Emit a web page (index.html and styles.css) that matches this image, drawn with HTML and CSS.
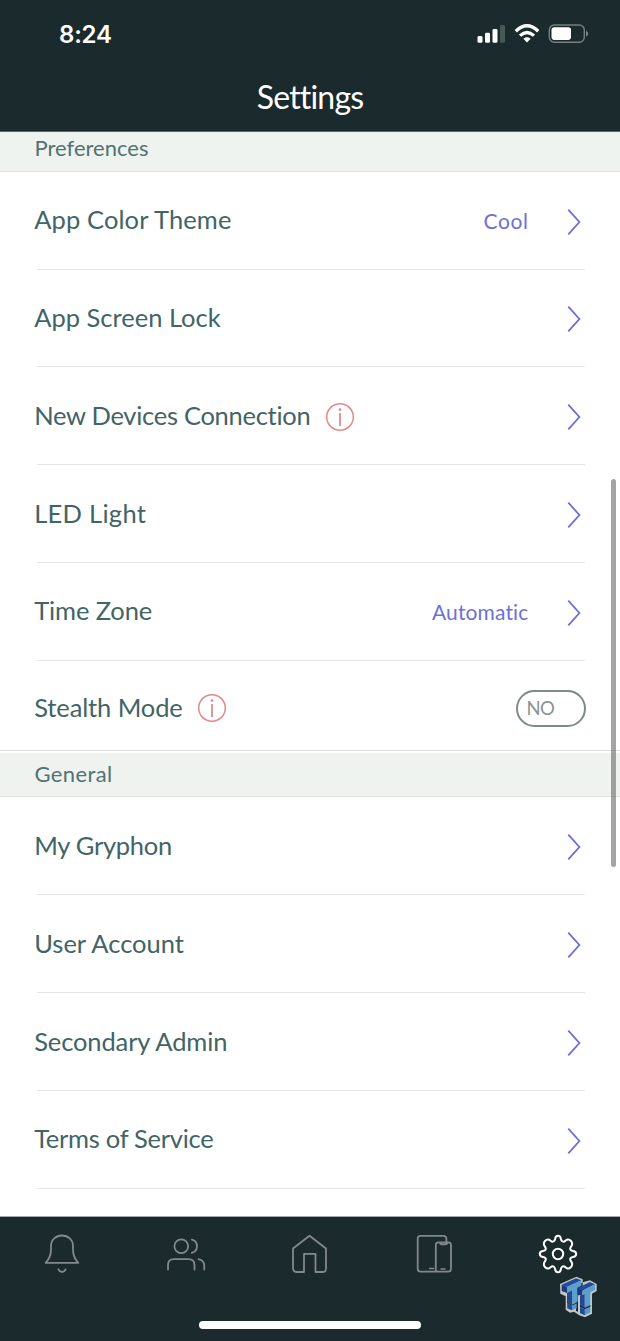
FILE: index.html
```html
<!DOCTYPE html>
<html lang="en">
<head>
<meta charset="utf-8">
<title>Settings</title>
<link rel="stylesheet" href="styles.css">
</head>
<body>
<svg class="defs" width="0" height="0">
  <symbol id="chevron" viewBox="0 0 14 28"><path d="M1.3 1.6L12.4 14L1.3 26.4" fill="none" stroke="currentColor" stroke-width="1.8"/></symbol>
  <symbol id="info" viewBox="0 0 30 30"><circle cx="15" cy="15" r="13.3" fill="none" stroke="currentColor" stroke-width="1.5"/><circle cx="15" cy="7.6" r="1.4" fill="currentColor"/><path d="M15 11V24" stroke="currentColor" stroke-width="1.8"/></symbol>
</svg>
<div class="screen">
  <header class="top">
    <div class="status">
      <span class="time">8:24</span>
      <svg class="indicators" viewBox="0 0 112 22">
        <g fill="#fff"><rect x="0.5" y="13" width="5" height="6.8" rx="1.4"/><rect x="8" y="9.8" width="5" height="10" rx="1.4"/><rect x="15.5" y="6" width="5" height="13.8" rx="1.4"/></g>
        <rect x="23" y="2" width="5" height="17.8" rx="1.4" fill="#485856"/>
        <g fill="none" stroke="#fff" stroke-width="3.3"><path d="M38.8 8.2Q50 -2.6 61.2 8.2"/><path d="M43 12.6Q50 6.2 57 12.6"/></g>
        <path d="M46.4 15.8Q50 12.9 53.6 15.8L50 19.6Z" fill="#fff"/>
        <rect x="72.3" y="2" width="35" height="17.2" rx="5" fill="none" stroke="#75807f" stroke-width="1.4"/>
        <rect x="74.5" y="4.3" width="19.5" height="12.6" rx="2.8" fill="#fff"/>
        <path d="M109 7.8Q111.3 8.8 111.3 10.7Q111.3 12.8 109 13.8Z" fill="#75807f"/>
      </svg>
    </div>
    <h1 class="title">Settings</h1>
  </header>
  <main class="list">
    <h2 class="section first">Preferences</h2>
    <div class="row"><span class="label loose">App Color Theme</span><span class="value wide">Cool</span><svg class="chev"><use href="#chevron"/></svg></div>
    <div class="row"><span class="label">App Screen Lock</span><svg class="chev"><use href="#chevron"/></svg></div>
    <div class="row"><span class="label tight">New Devices Connection</span><svg class="info"><use href="#info"/></svg><svg class="chev"><use href="#chevron"/></svg></div>
    <div class="row"><span class="label looser">LED Light</span><svg class="chev"><use href="#chevron"/></svg></div>
    <div class="row"><span class="label snug">Time Zone</span><span class="value">Automatic</span><svg class="chev"><use href="#chevron"/></svg></div>
    <div class="row last"><span class="label snug">Stealth Mode</span><svg class="info"><use href="#info"/></svg><span class="toggle">NO</span></div>
    <h2 class="section general">General</h2>
    <div class="row"><span class="label tight">My Gryphon</span><svg class="chev"><use href="#chevron"/></svg></div>
    <div class="row"><span class="label">User Account</span><svg class="chev"><use href="#chevron"/></svg></div>
    <div class="row"><span class="label snug">Secondary Admin</span><svg class="chev"><use href="#chevron"/></svg></div>
    <div class="row"><span class="label tight">Terms of Service</span><svg class="chev"><use href="#chevron"/></svg></div>
  </main>
  <nav class="tabs">
    <svg viewBox="0 0 40 40"><path d="M3.7 28.8H36.3C33 25.5 31 22 31 15.5V12C31 5.5 26 1.5 20 1.5S9 5.5 9 12V15.5C9 22 7 25.5 3.7 28.8Z"/><path d="M16.4 35.4Q17.5 38 20 38T23.6 35.4"/></svg>
    <svg viewBox="0 0 40 40"><circle cx="15.3" cy="12.2" r="6.9"/><path d="M25.8 5.6A6.8 6.8 0 0 1 25.8 18.8M2 35.5V31Q2 25.2 8 25.2H22.5Q28.5 25.2 28.5 31V35.5M32.5 25.2Q38.3 26.5 38.3 32V35.5"/></svg>
    <svg viewBox="0 0 40 40"><path d="M19.5 1.7L36 14.5V34.5Q36 38 32.5 38H25.5V19.8H14V38H7Q3 38 3 34V14.5Z"/></svg>
    <svg viewBox="0 0 40 40"><path d="M32.4 8.3V5Q32.4 1.8 29.2 1.8H6.5Q3.7 1.8 3.7 4.6V34.8Q3.7 37.6 6.5 37.6H34.3Q37 37.6 37 34.8V11Q37 8.3 34.3 8.3H24.5Q21.8 8.3 21.8 11V37M26 8.5Q26 10.4 27.8 10.4H31.5Q33.2 10.4 33.2 8.5"/><path stroke-width="1.4" d="M15.6 34.5H19.6M27 35H31"/></svg>
    <svg class="active" viewBox="0 0 40 40"><circle cx="20" cy="20" r="5.2"/><path d="M17.2 4.5Q17.6 1.8 20 1.8T22.8 4.5Q23.5 8.2 26.2 7.6L28.8 5.8Q31 5 32.8 6.8T34 10.9L32.4 13.8Q31.5 16.4 35.2 17.1Q38.2 17.6 38.2 20T35.2 22.9Q31.5 23.6 32.4 26.2L34 29.1Q34.6 31.4 32.8 33.2T28.8 34.2L26.2 32.4Q23.5 31.8 22.8 35.5Q22.4 38.2 20 38.2T17.2 35.5Q16.5 31.8 13.8 32.4L11.2 34.2Q9 35 7.2 33.2T6 29.1L7.6 26.2Q8.5 23.6 4.8 22.9Q1.8 22.4 1.8 20T4.8 17.1Q8.5 16.4 7.6 13.8L6 10.9Q5.4 8.6 7.2 6.8T11.2 5.8L13.8 7.6Q16.5 8.2 17.2 4.5Z"/></svg>
    <span class="home-indicator"></span>
  </nav>
  <span class="scrollbar"></span>
  <svg class="logo" viewBox="0 0 180 180">
    <path d="M30 57L79 35L98 43V52L120 46L140 57V78L126 86V146L105 157L88 151L72 140L60 143L47 134V94L31 86Z" fill="#c3c6c5"/>
    <path d="M82 64L98 52V80L84 92V140L78 138V112L82 108Z" fill="#1c2b2d"/>
    <path d="M35 59L78 40L94 46L51 66Z" fill="#214b9b"/>
    <path d="M35 59L51 66V84L35 78Z" fill="#1d397b"/>
    <path d="M51 66L94 46V62L82 68V112L66 119V76L51 84Z" fill="#5b9fce"/>
    <path d="M51 84L66 76V119L51 110Z" fill="#244b91"/>
    <path d="M51 110L66 119L82 112V116L66 123L51 115Z" fill="#17243f"/>
    <path d="M52 115L66 122L80 115V130L65 136L52 130Z" fill="#5597c7"/>
    <path d="M52 115L66 122V136L52 130Z" fill="#244b91"/>
    <path d="M82 70L119 51L135 58L97 77Z" fill="#214b9b"/>
    <path d="M82 70L97 77V94L82 88Z" fill="#1d397b"/>
    <path d="M97 77L135 58V75L121 82V122L104 129V88L97 94Z" fill="#5b9fce"/>
    <path d="M90 92L104 88V129L90 122Z" fill="#244b91"/>
    <path d="M90 121L104 128L121 121V126L104 133L90 126Z" fill="#17243f"/>
    <path d="M90 126L104 133L121 125V142L104 151L90 144Z" fill="#5597c7"/>
    <path d="M90 126L104 133V151L90 144Z" fill="#244b91"/>
  </svg>
</div>
</body>
</html>
```
FILE: styles.css
```css
* { box-sizing: border-box; }
body { margin: 0; font-family: Lato, "Open Sans", sans-serif; background: #fff; }
.defs { position: absolute; }
.screen { position: relative; width: 620px; height: 1341px; overflow: hidden; display: flex; flex-direction: column; }

/* Header */
.top { flex: none; height: 132px; background: #1b2a2d; color: #fff; border-bottom: 1px solid #5a6566; }
.status { display: flex; justify-content: space-between; padding: 20px 31px 0 59px; height: 68px; }
.time { margin-top: 1px; font: 600 24px/28px Inter, sans-serif; letter-spacing: -.2px; }
.indicators { width: 112px; height: 22px; margin-top: 3px; }
.title { margin: 9px 0 0; text-align: center; font-size: 32px; line-height: 40px; font-weight: 400; letter-spacing: -.8px; }

/* Settings list */
.list { flex: 1; min-height: 0; overflow: hidden; }
.section { margin: 0; height: 46.4px; background: #eef3f0; border-top: 2px solid #fff; border-bottom: 1px solid #dfe4e2; padding: 7px 34.5px; font-size: 22px; line-height: 28px; font-weight: 400; color: #527273; }
.section.first { height: 39.7px; border-top: 0; padding-top: 2px; }
.general { letter-spacing: .4px; }
.row { height: 97.85px; display: flex; align-items: center; margin: 0 35px 0 37px; border-bottom: 1px solid #e4e5e6; color: #426466; }
.row.last { height: 90.2px; margin: 0; padding: 2px 34.5px 0 37px; border-color: #dcdfde; }
.label { margin: -2px 0 0 -2.8px; font-size: 25.5px; line-height: 32px; }
.loose { letter-spacing: .12px; }
.looser { letter-spacing: .28px; }
.snug { letter-spacing: -.12px; }
.tight { letter-spacing: -.28px; }
.value { margin: 0 38.5px 0 auto; font-size: 21px; letter-spacing: .15px; color: #6d70d6; }
.value.wide { letter-spacing: .6px; }
.chev { width: 14px; height: 28px; margin: 3px 4px 0 auto; color: #6d70d6; }
.value + .chev { margin-left: 0; }
.info { width: 30px; height: 30px; color: #e2898a; margin: 3px 0 0 14.8px; }
.last .label { margin-top: 0; }
.toggle { margin: 4px 0 0 auto; width: 70px; height: 37px; border: 2px solid #7e8b89; border-radius: 19px; padding-left: 9px; font-size: 18.5px; line-height: 33px; letter-spacing: -.6px; color: #8a9492; }

/* Bottom tab bar */
.tabs { position: relative; flex: none; height: 125px; background: #1b2a2d; border-top: 1px solid #a4aaab; display: flex; justify-content: space-between; padding: 17px 42.5px 0 42px; }
.tabs svg { width: 40px; height: 40px; fill: none; stroke: #82898a; stroke-width: 1.8; stroke-linejoin: round; stroke-linecap: round; }
.tabs .active { stroke: #fff; stroke-width: 2; }
.home-indicator { position: absolute; left: 199px; top: 104px; width: 222px; height: 8px; border-radius: 4px; background: #fff; }

/* Overlays */
.scrollbar { position: absolute; left: 611px; top: 479px; width: 5px; height: 388px; border-radius: 3px; background: rgba(90, 90, 90, .55); }
.logo { position: absolute; left: 550px; top: 1265px; width: 60px; height: 60px; }
```
